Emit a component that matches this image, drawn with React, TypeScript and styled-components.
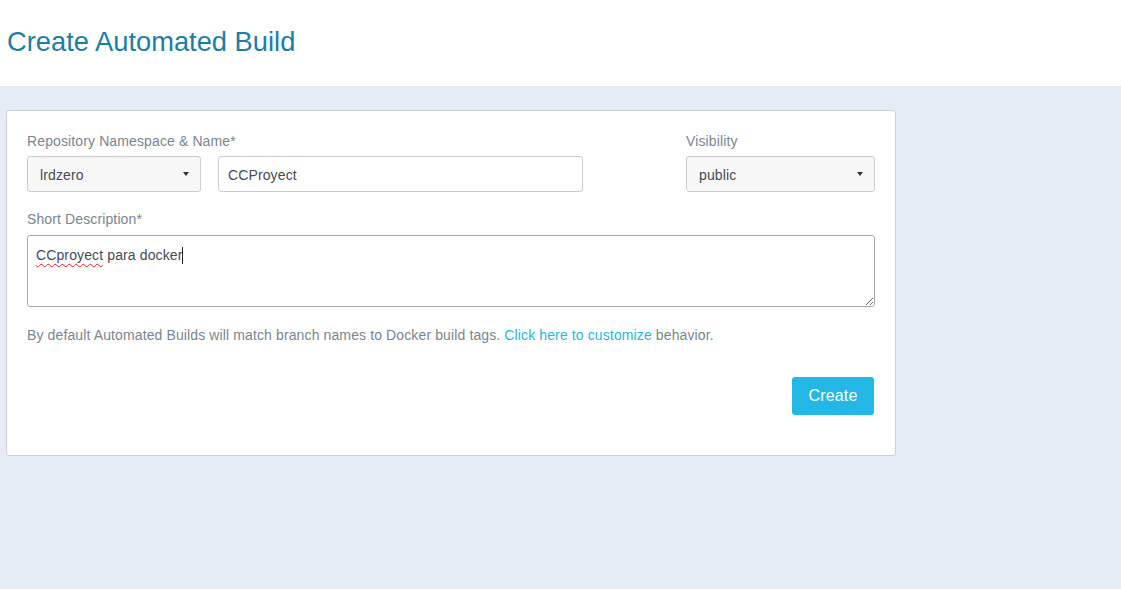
import styled, { createGlobalStyle } from "styled-components";

const GlobalStyle = createGlobalStyle`
  html, body {
    margin: 0;
    padding: 0;
    background: #e6ecf5;
    font-family: "Liberation Sans", Arial, Helvetica, sans-serif;
  }
  * {
    box-sizing: border-box;
  }
`;

const Header = styled.header`
  height: 86px;
  background: #ffffff;
  padding: 26px 7px 0;
`;

const Title = styled.h1`
  margin: 0;
  font-size: 27.3px;
  font-weight: 400;
  color: #1a7fa3;
`;

const Page = styled.main`
  padding: 24px 225px 0 6px;
`;

const Card = styled.section`
  background: #ffffff;
  border: 1px solid #c8d0da;
  border-radius: 3px;
  padding: 22px 20px 40px;
  height: 346px;
  letter-spacing: 0.12px;
`;

const Row = styled.div`
  display: flex;
  align-items: flex-end;
`;

const Field = styled.div<{ $width?: number }>`
  display: flex;
  flex-direction: column;
  width: ${(p) => (p.$width ? `${p.$width}px` : "auto")};
`;

const Label = styled.label`
  font-size: 14px;
  color: #7a8591;
  line-height: 17px;
  margin-bottom: 6px;
`;

const Inline = styled.div`
  display: flex;
  gap: 17px;
`;

const Select = styled.div<{ $width: number }>`
  width: ${(p) => p.$width}px;
  height: 36px;
  background: #f7f7f7;
  border: 1px solid #cccccc;
  border-radius: 3px;
  display: flex;
  align-items: center;
  justify-content: space-between;
  padding: 2px 11px 0 12px;
  font-size: 14px;
  color: #444c55;
`;

const Caret = styled.span`
  width: 0;
  height: 0;
  border-left: 3px solid transparent;
  border-right: 3px solid transparent;
  border-top: 4px solid #333333;
  margin-top: -2px;
`;

const TextInput = styled.div<{ $width: number }>`
  width: ${(p) => p.$width}px;
  height: 36px;
  background: #ffffff;
  border: 1px solid #cccccc;
  border-radius: 3px;
  display: flex;
  align-items: center;
  padding: 2px 9px 0;
  font-size: 14px;
  color: #444c55;
`;

const Spacer = styled.div`
  flex: 1;
`;

const DescField = styled.div`
  margin-top: 19px;
  display: flex;
  flex-direction: column;
`;

const DescLabel = styled(Label)`
  margin-bottom: 7px;
`;

const TextArea = styled.div`
  height: 72px;
  border: 1px solid #a9a9a9;
  border-radius: 3px;
  padding: 11px 8px 9px;
  font-size: 14px;
  color: #444c55;
  resize: vertical;
  overflow: auto;
  line-height: 17px;
`;

const Misspelled = styled.span`
  text-decoration: underline wavy #e02020;
  text-decoration-thickness: 1px;
  text-underline-offset: 3px;
`;

const Cursor = styled.span`
  display: inline-block;
  width: 1px;
  height: 17px;
  background: #222222;
  vertical-align: -4px;
`;

const Help = styled.p`
  margin: 20px 0 0;
  font-size: 14px;
  color: #7a8591;
`;

const Link = styled.a`
  color: #23b7e5;
  text-decoration: none;
`;

const Actions = styled.div`
  display: flex;
  justify-content: flex-end;
  margin-top: 34px;
  padding-right: 1px;
`;

const Button = styled.button`
  width: 82px;
  height: 38px;
  background: #23b7e5;
  border: none;
  border-radius: 3px;
  color: #ffffff;
  font-family: inherit;
  font-size: 16px;
  letter-spacing: 0.15px;
  cursor: pointer;
`;

export default function App() {
  return (
    <>
      <GlobalStyle />
      <Header>
        <Title>Create Automated Build</Title>
      </Header>
      <Page>
        <Card>
          <Row>
            <Field>
              <Label>Repository Namespace &amp; Name*</Label>
              <Inline>
                <Select $width={174}>
                  lrdzero
                  <Caret />
                </Select>
                <TextInput $width={365}>CCProyect</TextInput>
              </Inline>
            </Field>
            <Spacer />
            <Field $width={189}>
              <Label>Visibility</Label>
              <Select $width={189}>
                public
                <Caret />
              </Select>
            </Field>
          </Row>
          <DescField>
            <DescLabel>Short Description*</DescLabel>
            <TextArea>
              <Misspelled>CCproyect</Misspelled> para docker
              <Cursor />
            </TextArea>
          </DescField>
          <Help>
            By default Automated Builds will match branch names to Docker build
            tags. <Link href="#">Click here to customize</Link> behavior.
          </Help>
          <Actions>
            <Button>Create</Button>
          </Actions>
        </Card>
      </Page>
    </>
  );
}
